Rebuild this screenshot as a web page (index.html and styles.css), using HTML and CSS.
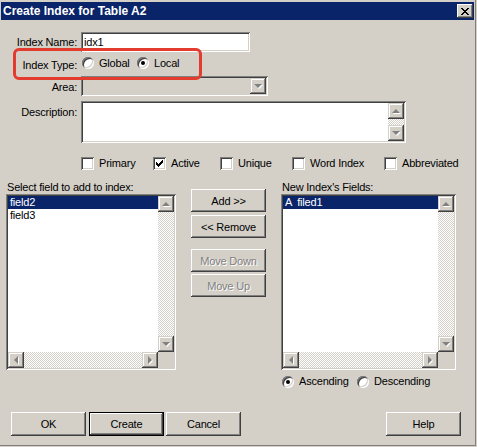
FILE: index.html
```html
<!DOCTYPE html>
<html>
  <head>
    <title>Create Index for Table A2</title>
    <link rel="stylesheet" href="styles.css">
  </head>
  <body>
    <div class="window">
      <div class="titlebar">
        <span>Create Index for Table A2</span>
        <button class="close-btn" type="button">
          <svg width="8" height="7" viewBox="0 0 8 7" shape-rendering="crispEdges">
            <path fill="#000" d="M0 0h2v1h-2z M6 0h2v1h-2z M1 1h2v1h-2z M5 1h2v1h-2z M2 2h4v1h-4z M3 3h2v1h-2z M2 4h4v1h-4z M1 5h2v1h-2z M5 5h2v1h-2z M0 6h2v1h-2z M6 6h2v1h-2z"></path>
          </svg>
        </button>
      </div>

      <!-- name / type / area / description -->
      <div class="fields">
        <span class="label">Index Name:</span>
        <div class="textbox name-box">idx1</div>

        <span class="label type-label">Index Type:</span>
        <div class="radio-group type-group">
          <label class="radio-opt"><span class="radio"></span>Global</label>
          <label class="radio-opt"><span class="radio on"></span>Local</label>
        </div>

        <span class="label top-label">Area:</span>
        <div class="combo">
          <span class="combo-value"></span>
          <span class="sb-btn down"></span>
        </div>

        <span class="label top-label">Description:</span>
        <div class="memo">
          <div class="memo-text"></div>
          <div class="vscroll">
            <span class="sb-btn up"></span>
            <span class="sb-track"></span>
            <span class="sb-btn down"></span>
          </div>
        </div>
      </div>

      <div class="flags">
        <label class="check"><span class="box"></span>Primary</label>
        <label class="check">
          <span class="box">
            <svg width="7" height="7" viewBox="0 0 7 7" shape-rendering="crispEdges">
              <path fill="#000" d="M6 0h1v1h-1z M5 1h2v1h-2z M0 2h1v1h-1z M4 2h3v1h-3z M0 3h2v1h-2z M3 3h3v1h-3z M0 4h5v1h-5z M1 5h3v1h-3z M2 6h1v1h-1z"></path>
            </svg>
          </span>Active
        </label>
        <label class="check"><span class="box"></span>Unique</label>
        <label class="check"><span class="box"></span>Word Index</label>
        <label class="check"><span class="box"></span>Abbreviated</label>
      </div>

      <div class="lists">
        <div class="panel">
          <div class="panel-label">Select field to add to index:</div>
          <div class="listbox">
            <div class="list-items">
              <div class="item selected">field2</div>
              <div class="item">field3</div>
            </div>
            <div class="vscroll">
              <span class="sb-btn up"></span>
              <span class="sb-track"></span>
              <span class="sb-btn down"></span>
            </div>
            <div class="hscroll">
              <span class="sb-btn left"></span>
              <span class="sb-track"></span>
              <span class="sb-btn right"></span>
            </div>
            <div class="sb-corner"></div>
          </div>
        </div>

        <div class="actions">
          <button class="btn" type="button">Add &gt;&gt;</button>
          <button class="btn remove-btn" type="button">&lt;&lt; Remove</button>
          <button class="btn disabled move-down" type="button">Move Down</button>
          <button class="btn disabled move-up" type="button">Move Up</button>
        </div>

        <div class="panel">
          <div class="panel-label">New Index's Fields:</div>
          <div class="listbox">
            <div class="list-items">
              <div class="item selected">A  filed1</div>
            </div>
            <div class="vscroll">
              <span class="sb-btn up"></span>
              <span class="sb-track"></span>
              <span class="sb-btn down"></span>
            </div>
            <div class="hscroll">
              <span class="sb-btn left"></span>
              <span class="sb-track"></span>
              <span class="sb-btn right"></span>
            </div>
            <div class="sb-corner"></div>
          </div>
          <div class="radio-group order-group">
            <label class="radio-opt"><span class="radio on"></span>Ascending</label>
            <label class="radio-opt"><span class="radio"></span>Descending</label>
          </div>
        </div>
      </div>

      <div class="footer">
        <button class="btn big" type="button">OK</button>
        <button class="btn big default" type="button">Create</button>
        <button class="btn big cancel-btn" type="button">Cancel</button>
        <button class="btn big help-btn" type="button">Help</button>
      </div>

      <div class="highlight"></div>
    </div>
  </body>
</html>
```

FILE: styles.css
```css
* {
  box-sizing: border-box;
}

body {
  margin: 0;
  background: #d4d0c8;
  font-family: "Liberation Sans", Arial, sans-serif;
  font-size: 11px;
  letter-spacing: -0.2px;
  color: #000;
}

.window {
  position: relative;
  width: 476px;
  height: 446px;
  padding-top: 2px;
  border-right: 1px solid #808080;
  border-bottom: 1px solid #808080;
}

/* title bar */
.titlebar {
  display: flex;
  align-items: center;
  justify-content: space-between;
  height: 18px;
  margin: 0 1px;
  padding: 0 1px 0 2px;
  background: #0a246a;
  color: #fff;
  font-size: 12px;
  font-weight: bold;
  letter-spacing: 0;
}

.close-btn {
  display: flex;
  align-items: center;
  justify-content: center;
  width: 16px;
  height: 14px;
  padding: 0;
  border: none;
  background: #d4d0c8;
  box-shadow: inset -1px -1px #404040, inset 1px 1px #fff, inset -2px -2px #808080;
}

/* common 3d frames */
.textbox,
.combo,
.memo,
.listbox,
.box {
  box-shadow: inset 1px 1px #808080, inset -1px -1px #fff, inset 2px 2px #404040, inset -2px -2px #d4d0c8;
}

.btn {
  padding: 0;
  border: none;
  background: #d4d0c8;
  font-family: inherit;
  font-size: 11px;
  letter-spacing: inherit;
  color: #000;
  width: 75px;
  height: 23px;
  box-shadow: inset -1px -1px #404040, inset 1px 1px #fff, inset -2px -2px #808080, inset 2px 2px #d4d0c8;
}

.btn.big {
  height: 24px;
}

.btn.disabled {
  color: #808080;
  text-shadow: 1px 1px #fff;
}

.btn.default {
  border: 1px solid #000;
}

/* form rows */
.fields {
  display: grid;
  grid-template-columns: 77px auto;
  grid-template-rows: 20px 24px 25px 42px;
  column-gap: 4px;
  margin-top: 12px;
}

.label {
  text-align: right;
  line-height: 13px;
  white-space: nowrap;
  align-self: center;
}

.type-label {
  padding-top: 2px;
}

.top-label {
  align-self: start;
  padding-top: 5px;
}

.textbox {
  width: 169px;
  height: 20px;
  padding: 2px 3px;
  background: #fff;
  line-height: 16px;
}

.radio-group {
  display: grid;
  align-items: center;
}

.type-group {
  grid-template-columns: 55px auto;
  padding: 0 0 2px 1px;
  align-self: center;
}

.radio-opt {
  display: flex;
  align-items: center;
  gap: 5px;
  line-height: 13px;
}

.radio {
  position: relative;
  width: 12px;
  height: 12px;
  border-radius: 50%;
  background: #fff;
  box-shadow: inset 1px 1px #808080, inset -1px -1px #fff, inset 2px 2px #404040, inset -2px -2px #d4d0c8;
}

.radio.on::after {
  content: "";
  position: absolute;
  left: 4px;
  top: 4px;
  width: 4px;
  height: 4px;
  border-radius: 50%;
  background: #000;
}

.combo {
  display: grid;
  grid-template-columns: 1fr 16px;
  width: 187px;
  height: 20px;
  padding: 2px;
  background: #d4d0c8;
}

.memo {
  display: grid;
  grid-template-columns: 1fr 16px;
  width: 325px;
  height: 42px;
  padding: 2px;
  background: #fff;
}

/* scroll bars */
.vscroll {
  display: grid;
  grid-template-rows: 16px 1fr 16px;
}

.hscroll {
  display: grid;
  grid-template-columns: 16px 1fr 16px;
}

.sb-track {
  background: repeating-conic-gradient(#fff 0 25%, #d4d0c8 0 50%) 0 0 / 2px 2px;
}

.sb-corner {
  background: #d4d0c8;
}

.sb-btn {
  display: flex;
  align-items: center;
  justify-content: center;
  width: 16px;
  height: 16px;
  background: #d4d0c8;
  box-shadow: inset -1px -1px #404040, inset 1px 1px #d4d0c8, inset -2px -2px #808080, inset 2px 2px #fff;
}

.sb-btn::after {
  content: "";
  width: 0;
  height: 0;
  border: 4px solid transparent;
  filter: drop-shadow(1px 1px 0 #fff);
}

.sb-btn.up::after {
  border-top-width: 0;
  border-bottom-color: #808080;
}

.sb-btn.down::after {
  border-bottom-width: 0;
  border-top-color: #808080;
}

.sb-btn.left::after {
  border-left-width: 0;
  border-right-color: #808080;
}

.sb-btn.right::after {
  border-right-width: 0;
  border-left-color: #808080;
}

/* option checkboxes */
.flags {
  display: grid;
  grid-template-columns: 72px 67px 72px 92px auto;
  margin: 14px 0 0 81px;
}

.check {
  display: flex;
  align-items: center;
  gap: 5px;
  height: 13px;
  line-height: 13px;
}

.box {
  display: flex;
  align-items: center;
  justify-content: center;
  width: 13px;
  height: 13px;
  background: #fff;
}

/* field lists */
.lists {
  display: grid;
  grid-template-columns: 170px 75px 175px;
  column-gap: 15px;
  align-items: start;
  margin: 11px 0 0 6px;
}

.panel-label {
  height: 13px;
  line-height: 13px;
  padding-left: 1px;
}

.listbox {
  display: grid;
  grid-template-columns: 1fr 16px;
  grid-template-rows: 1fr 16px;
  height: 176px;
  padding: 2px;
  background: #fff;
}

.list-items {
  background: #fff;
}

.item {
  height: 13px;
  line-height: 13px;
  padding-left: 2px;
  white-space: pre;
}

.item.selected {
  background: #0a246a;
  color: #fff;
}

.actions {
  display: flex;
  flex-direction: column;
  padding-top: 8px;
}

.remove-btn {
  margin-top: 3px;
}

.move-down {
  margin-top: 11px;
}

.move-up {
  margin-top: 2px;
}

.order-group {
  grid-template-columns: 75px auto;
  margin-top: 5px;
  padding-left: 1px;
}

/* bottom buttons */
.footer {
  display: flex;
  margin-top: 24px;
  padding: 0 14px 0 11px;
}

.footer .default {
  margin-left: 3px;
}

.cancel-btn {
  margin-left: 2px;
}

.help-btn {
  margin-left: auto;
}

/* red marker round the index type choice */
.highlight {
  position: absolute;
  left: 13px;
  top: 48px;
  width: 189px;
  height: 32px;
  border: 3px solid #e33b2e;
  border-radius: 6px;
}
```
